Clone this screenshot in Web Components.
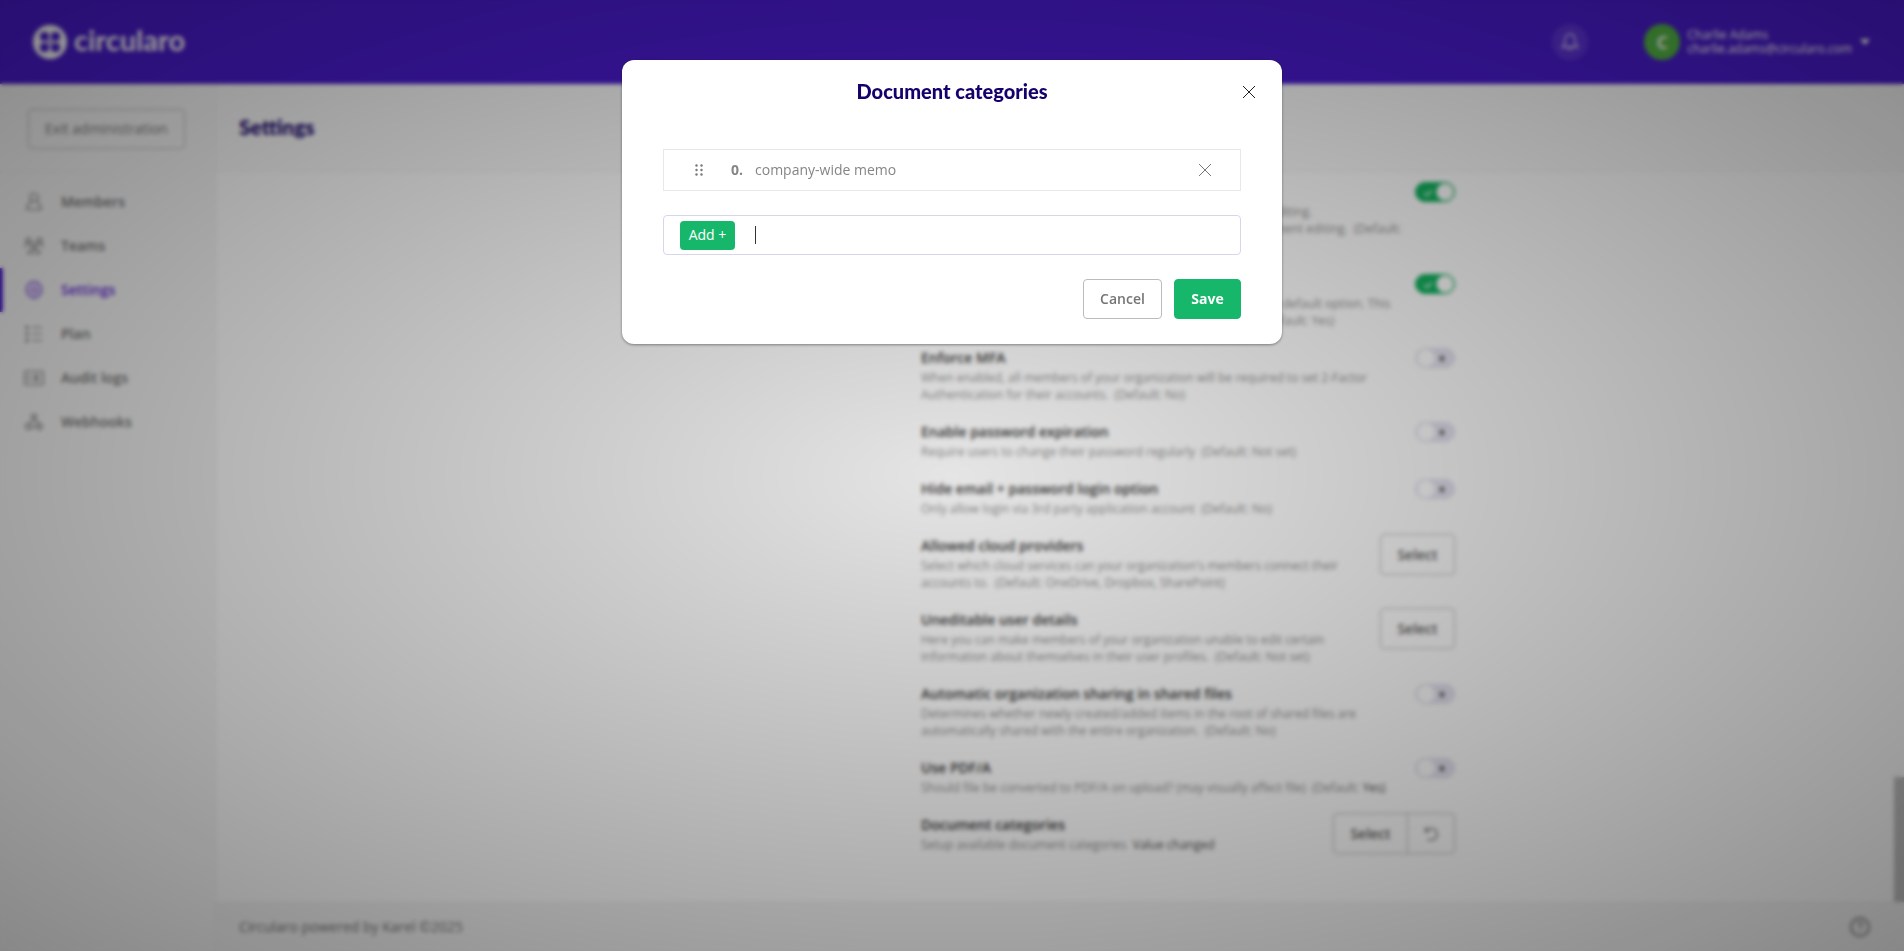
<!DOCTYPE html>
<html lang="en">
<head>
<meta charset="utf-8">
<title>Circularo – Settings</title>
<style>
  html, body { margin: 0; height: 100%; }
  body { font: 14px/20px "Open Sans", "Noto Sans", sans-serif; color: #333; background: #fff; overflow: hidden; }
</style>
</head>
<body>
<circ-app>
  <circ-header slot="header"></circ-header>
  <circ-sidebar slot="sidebar">
    <circ-nav-item icon="member">Members</circ-nav-item>
    <circ-nav-item icon="team">Teams</circ-nav-item>
    <circ-nav-item icon="gear" active>Settings</circ-nav-item>
    <circ-nav-item icon="plan">Plan</circ-nav-item>
    <circ-nav-item icon="log">Audit logs</circ-nav-item>
    <circ-nav-item icon="hook">Webhooks</circ-nav-item>
  </circ-sidebar>
  <circ-setting label="Document editing" control="on" style="--indent: 325px; --space: 20px">text editing.<br>document editing. &nbsp;(Default:<br>Yes)</circ-setting>
  <circ-setting label="Default option" control="on" style="--indent: 340px">the default option. This<br>(Default: Yes)</circ-setting>
  <circ-setting label="Enforce MFA" control="off">When enabled, all members of your organization will be required to set 2-Factor<br>Authentication for their accounts. &nbsp;(Default: No)</circ-setting>
  <circ-setting label="Enable password expiration" control="off">Require users to change their password regularly &nbsp;(Default: Not set)</circ-setting>
  <circ-setting label="Hide email + password login option" control="off">Only allow login via 3rd party application account &nbsp;(Default: No)</circ-setting>
  <circ-setting label="Allowed cloud providers" control="select">Select which cloud services can your organization's members connect their<br>accounts to. &nbsp;(Default: OneDrive, Dropbox, SharePoint)</circ-setting>
  <circ-setting label="Uneditable user details" control="select">Here you can make members of your organization unable to edit certain<br>information about themselves in their user profiles. &nbsp;(Default: Not set)</circ-setting>
  <circ-setting label="Automatic organization sharing in shared files" control="off">Determines whether newly created/added items in the root of shared files are<br>automatically shared with the entire organization. &nbsp;(Default: No)</circ-setting>
  <circ-setting label="Use PDF/A" control="off">Should file be converted to PDF/A on upload? (may visually affect file) &nbsp;(Default: <b>Yes)</b></circ-setting>
  <circ-setting label="Document categories" control="reset">Setup available document categories &nbsp;<b>Value changed</b></circ-setting>
  <circ-footer slot="footer"></circ-footer>
</circ-app>
<circ-modal heading="Document categories">
  <circ-category number="0">company-wide memo</circ-category>
  <circ-add-field></circ-add-field>
</circ-modal>

<script>
class Base extends HTMLElement {
  connectedCallback() {
    if (this.shadowRoot) return;
    const root = this.attachShadow({ mode: 'open' });
    root.innerHTML = '<style>*{box-sizing:border-box}button,input{font:inherit;color:inherit;margin:0}' + this.css() + '</style>' + this.html();
  }
}

const ICONS = {
  member: '<circle cx="10" cy="5.500" r="4"/><path d="M7.500 9.500C4.500 11.500 3 13.500 3 17.500h14c0-4-1.500-6-4.500-8"/>',
  team: '<circle cx="4.500" cy="4.500" r="2.500"/><circle cx="15.500" cy="4.500" r="2.500"/><circle cx="10" cy="10" r="2.500"/><path d="M.8 11.500c0-2.500 1.500-4 3.700-4S7 8 7.500 9M19.200 11.500c0-2.500-1.500-4-3.700-4S13 8 12.500 9M4 17.500c0-3 2.500-4 6-4s6 1 6 4z"/>',
  gear: '<path d="M8.200 2.800L10 1.200l1.800 1.600 2.600-.3.900 2.400 2.200 1.300-.6 2.600 1 2.200-1.800 1.800-.2 2.600-2.600.6-1.500 2.100L10 17l-1.800 1.100-1.500-2.100-2.600-.6-.2-2.600L2.100 11l1-2.200-.6-2.600 2.200-1.300.9-2.400z"/><circle cx="10" cy="9.800" r="3"/>',
  plan: '<path d="M2 2.500h2v2H2zM2 9h2v2H2zM2 15.500h2v2H2zM8 3.500h10M8 10h10M8 16.500h10"/>',
  log: '<rect x=".8" y="3" width="18.400" height="14" rx="1.500"/><path d="M9 7h6.500M9 10h6.500M9 13h6.500M5 6v8M12 6.500v7"/>',
  hook: '<circle cx="10" cy="4.500" r="2.500"/><circle cx="4.500" cy="14.500" r="2.800"/><circle cx="15.500" cy="14.500" r="2.800"/><path d="M9.500 6L6 12M10.500 6l4 7M7 15h6"/>'
};

customElements.define('circ-app', class extends Base {
  css() { return `
    :host { display: grid; height: 100vh; grid-template: 84px minmax(0, 1fr) / 216px minmax(0, 1fr); }
    .head { grid-column: 1 / 3; }
    .main { display: grid; grid-template-rows: 88px minmax(0, 1fr) 49px; min-width: 0; }
    .title { display: flex; align-items: center; padding: 0 23px 2px; background: #fbfbfb; border-bottom: 1px solid #f0f0f0; }
    h1 { margin: 0; font: 900 21px/28px Lato, "Open Sans", sans-serif; color: #16006c; }
    .body { display: flex; overflow: hidden; }
    .grid { flex: 1; display: grid; grid-template-columns: 705fr 534px 439fr; }
    .list { grid-column: 2; display: flex; flex-direction: column; justify-content: flex-end; padding-bottom: 30px; }
    .rail { width: 10px; display: flex; align-items: flex-end; }
    .thumb { width: 100%; height: 125px; background: #c1c1c1; }`; }
  html() { return `
    <div class="head"><slot name="header"></slot></div>
    <slot name="sidebar"></slot>
    <main class="main">
      <div class="title"><h1>Settings</h1></div>
      <div class="body">
        <div class="grid"><div class="list"><slot></slot></div></div>
        <div class="rail"><div class="thumb"></div></div>
      </div>
      <slot name="footer"></slot>
    </main>`; }
});

customElements.define('circ-header', class extends Base {
  css() { return `
    :host { display: flex; align-items: center; height: 84px; padding: 0 34px 0 32px; background: #4a1cce; color: #fff; }
    .logo { display: flex; align-items: center; gap: 6px; flex: 1; color: #fff; text-decoration: none; font: 700 29px/32px Lato, sans-serif; }
    .logo span { padding-bottom: 4px; }
    button { border: 0; background: none; padding: 0; color: #fff; display: flex; align-items: center; text-align: left; }
    .bell { width: 36px; height: 36px; border-radius: 50%; background: rgba(255,255,255,.1); justify-content: center; margin-right: 56px; }
    .bell svg { opacity: .8; }
    .avatar { width: 36px; height: 36px; border-radius: 50%; background: #54b545; display: grid; place-items: center; font-weight: 700; font-size: 18px; margin-right: 7px; }
    .who { font-size: 12px; line-height: 14px; }
    .caret { margin-left: 8px; }`; }
  html() { return `
    <a class="logo" href="#">
      <svg width="36" height="36" viewBox="0 0 36 36"><circle cx="18" cy="18" r="17" fill="#fff"/>
      <g fill="#4a1cce"><path d="M12 8h1a4 4 0 0 1 4 4v4l-1 1h-4a4 4 0 0 1-4-4v-1a4 4 0 0 1 4-4zM24 8h-1a4 4 0 0 0-4 4v4l1 1h4a4 4 0 0 0 4-4v-1a4 4 0 0 0-4-4zM12 28h1a4 4 0 0 0 4-4v-4l-1-1h-4a4 4 0 0 0-4 4v1a4 4 0 0 0 4 4zM24 28h-1a4 4 0 0 1-4-4v-4l1-1h4a4 4 0 0 1 4 4v1a4 4 0 0 1-4 4z"/></g><circle cx="18" cy="18" r="3" fill="#fff"/><circle cx="18" cy="18" r="1.300" fill="#4a1cce"/></svg>
      <span>circularo</span></a>
    <button class="bell" aria-label="Notifications"><svg width="20" height="20" viewBox="0 0 20 20" fill="none" stroke="#fff" stroke-width="1.300"><path d="M2.500 15c2-1.500 2.500-3.500 2.500-6.500C5 4.500 7 2 10 2s5 2.500 5 6.500c0 3 .5 5 2.500 6.500zM8 15.500c.3 2.500 3.700 2.500 4 0"/></svg></button>
    <button class="user"><span class="avatar">C</span>
      <span class="who">Charlie Adams<br>charlie.adams@circularo.com</span>
      <svg class="caret" width="10" height="6" viewBox="0 0 10 6"><path d="M0 0h10L5 6z" fill="#fff"/></svg></button>`; }
});

customElements.define('circ-sidebar', class extends Base {
  css() { return `
    :host { display: flex; flex-direction: column; background: #f8f8f8; border-right: 1px solid #f0f0f0; }
    .top { height: 88px; padding: 25px 30px 0 28px; border-bottom: 1px solid #f0f0f0; }
    .top button { width: 100%; height: 40px; border: 1px solid #bbb; border-radius: 4px; background: none; color: #808080; padding: 0; }
    nav { padding-top: 8px; }`; }
  html() { return `<div class="top"><button>Exit administration</button></div><nav><slot></slot></nav>`; }
});

customElements.define('circ-nav-item', class extends Base {
  css() { return `
    :host { display: block; color: #747474; }
    :host([active]) { color: #6428dc; }
    a { display: flex; align-items: center; gap: 17px; height: 44px; padding-left: 21px; border-left: 3px solid transparent; color: inherit; text-decoration: none; font-weight: 600; }
    :host([active]) a { border-color: #4a1cce; }`; }
  html() { return `<a href="#"><svg width="20" height="20" viewBox="0 0 20 20" fill="none" stroke="currentColor" stroke-width="1.200">${ICONS[this.getAttribute('icon')]}</svg><slot></slot></a>`; }
});

customElements.define('circ-setting', class extends Base {
  css() { return `
    :host { display: flex; justify-content: space-between; align-items: flex-start; }
    .text { white-space: nowrap; padding-bottom: var(--space, 19px); width: 0; }
    label { display: block; height: 21px; font-weight: 600; color: #3a3a3a; }
    .desc { font-size: 12px; line-height: 17px; color: #949494; padding-left: var(--indent, 0); }
    ::slotted(b) { font-weight: 400; color: #555; }
    .switch { display: grid; width: 40px; height: 20px; }
    .switch > * { grid-area: 1 / 1; }
    input { appearance: none; width: 40px; height: 20px; border-radius: 10px; border: 1px solid #dcd9ea;
      background: radial-gradient(circle at 10px 9px, #fff 8px, transparent 9px) #e6e3f1; }
    input:checked { border-color: #14ad5c; background: radial-gradient(circle at 29px 9px, #fff 8px, transparent 9px) #14b25f; }
    svg { pointer-events: none; }
    .group { display: flex; }
    button { height: 41px; margin-top: -2px; padding: 0 16px; min-width: 75px; border: 1px solid #bbb; border-radius: 4px; background: none; color: #606060; font-weight: 600; }
    .group button:first-child { border-radius: 4px 0 0 4px; min-width: 75px; }
    .group button + button { min-width: 48px; margin-left: -1px; padding: 0; border-radius: 0 4px 4px 0; display: grid; place-items: center; }`; }
  html() {
    const kind = this.getAttribute('control');
    const mark = kind === 'on'
      ? '<path d="M9 11l3 2.500 5-5" fill="none" stroke="#fff" stroke-width="1.300"/>'
      : '<path d="M25 8l4 5M29 8l-4 5" fill="none" stroke="#555" stroke-width="2"/>';
    const sel = '<button id="c">Select</button>';
    const control = kind === 'select' ? sel
      : kind === 'reset' ? `<div class="group">${sel}<button aria-label="Reset"><svg width="16" height="16" viewBox="0 0 16 16" fill="none" stroke="currentColor" stroke-width="1.200"><path d="M2.500 1.500v4h4M3 5.200A6 6 0 1 1 4.500 13"/></svg></button></div>`
      : `<span class="switch"><input id="c" type="checkbox" role="switch"${kind === 'on' ? ' checked' : ''}><svg width="40" height="20">${mark}</svg></span>`;
    return `<div class="text"><label for="c">${this.getAttribute('label')}</label><div class="desc"><slot></slot></div></div>${control}`;
  }
});

customElements.define('circ-footer', class extends Base {
  css() { return `
    :host { display: flex; align-items: center; justify-content: space-between; padding: 0 34px 0 23px; background: #f6f6f6; border-top: 1px solid #f0f0f0; color: #777; }
    a { display: flex; color: #888; }`; }
  html() { return `<span>Circularo powered by Karel ©2025</span>
    <a href="#" aria-label="Help"><svg width="20" height="20" viewBox="0 0 20 20" fill="none" stroke="currentColor" stroke-width="2"><circle cx="10" cy="10" r="9"/><path d="M7.500 8c0-3.500 5-3.500 5-.5 0 2-2.500 2-2.500 4M10 13.500v1.500" stroke-width="1.500"/></svg></a>`; }
});

customElements.define('circ-modal', class extends Base {
  css() { return `
    :host { position: fixed; inset: 0; display: flex; justify-content: center; align-items: flex-start; padding-top: 60px; box-sizing: border-box;
      background: radial-gradient(rgba(0,0,0,.1), rgba(0,0,0,.45)); backdrop-filter: blur(2px); }
    .dialog { width: 660px; max-width: 100%; border-radius: 12px; background: #fff; padding: 0 41px 25px; box-shadow: 0 1px 3px rgba(0,0,0,.4); display: grid; gap: 24px; }
    header { display: grid; grid-template-columns: 32px 1fr 32px; align-items: center; height: 65px; margin: 0 -24px; padding-bottom: 2px; }
    h2 { grid-column: 2; margin: 0; text-align: center; font: 900 20px/28px Lato, sans-serif; color: #16006c; padding-bottom: 2px; }
    .close { border: 0; background: none; padding: 0; height: 32px; display: grid; place-items: center; color: #222; }
    footer { display: flex; justify-content: flex-end; gap: 12px; }
    footer button { height: 40px; border-radius: 4px; border: 1px solid #bbb; background: #fff; color: #757575; font-weight: 600; padding: 0 16px; min-width: 79px; }
    footer .save { border-color: #17b76b; background: #17b76b; color: #fff; font-weight: 700; min-width: 67px; }`; }
  html() { return `<div class="dialog" role="dialog" aria-labelledby="h">
    <header><h2 id="h">${this.getAttribute('heading')}</h2><button class="close" aria-label="Close"><svg width="14" height="14" viewBox="0 0 14 14" stroke="currentColor"><path d="M1 1l12 12M13 1L1 13"/></svg></button></header>
    <slot></slot>
    <footer><button>Cancel</button><button class="save">Save</button></footer></div>`; }
});

customElements.define('circ-category', class extends Base {
  css() { return `
    :host { display: flex; align-items: center; height: 42px; box-sizing: border-box; border: 1px solid #e8e8e8; padding: 0 28px 0 31px; color: #858585; }
    .num { font-weight: 700; width: 24px; margin-left: 28px; }
    .name { flex: 1; }
    button { border: 0; background: none; padding: 0; display: grid; place-items: center; color: #777; }`; }
  html() { return `<svg width="8" height="12" viewBox="0 0 8 12" fill="#777"><circle cx="1.500" cy="1.500" r="1.200"/><circle cx="6.500" cy="1.500" r="1.200"/><circle cx="1.500" cy="6" r="1.200"/><circle cx="6.500" cy="6" r="1.200"/><circle cx="1.500" cy="10.500" r="1.200"/><circle cx="6.500" cy="10.500" r="1.200"/></svg>
    <span class="num">${this.getAttribute('number')}.</span><span class="name"><slot></slot></span>
    <button aria-label="Remove"><svg width="14" height="14" viewBox="0 0 14 14" stroke="currentColor"><path d="M1 1l12 12M13 1L1 13"/></svg></button>`; }
});

customElements.define('circ-add-field', class extends Base {
  css() { return `
    :host { display: flex; align-items: center; gap: 20px; height: 40px; box-sizing: border-box; border: 1px solid #d8d6ea; border-radius: 4px; padding: 0 16px; }
    button { width: 55px; height: 29px; border: 0; border-radius: 4px; background: #17b76b; color: #fff; padding: 0; white-space: nowrap; }
    input { flex: 1; min-width: 0; height: 32px; padding: 0; border: 0; outline: 0; caret-color: transparent; color: #333;
      background: linear-gradient(#333,#333) 0 50% / 1px 18px no-repeat; }`; }
  html() { return `<button>Add +</button><input type="text" aria-label="New category">`; }
});
</script>
</body>
</html>
